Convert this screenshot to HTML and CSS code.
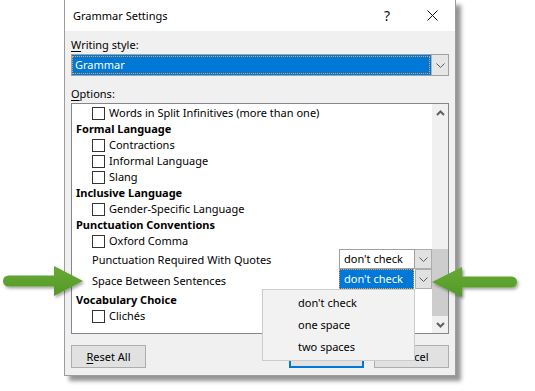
FILE: index.html
```html
<!DOCTYPE html>
<html>
<head>
<meta charset="utf-8">
<title>Grammar Settings</title>
<link rel="stylesheet" href="styles.css">
</head>
<body>
<div class="dialog">
  <div class="titlebar">
    <span class="title">Grammar Settings</span>
    <span class="tb-btn help">?</span>
    <span class="tb-btn close"><svg width="11" height="11" viewBox="0 0 11 11"><path d="M0.5 0.5 L10.5 10.5 M10.5 0.5 L0.5 10.5" stroke="#111" stroke-width="1" fill="none"/></svg></span>
  </div>
  <div class="content">
    <div class="label"><u>W</u>riting style:</div>
    <div class="combo">
      <div class="combo-value"><span class="focus-rect">Grammar</span></div>
      <div class="combo-btn"><svg width="9" height="5" viewBox="0 0 9 5"><polyline points="0.5,0.5 4.5,4.5 8.5,0.5" fill="none" stroke="#5a5a5a" stroke-width="1"/></svg></div>
    </div>
    <div class="label options-label"><u>O</u>ptions:</div>
    <div class="listbox">
      <div class="list">
        <div class="row-c"><span class="box"></span>Words in Split Infinitives (more than one)</div>
        <div class="row-h">Formal Language</div>
        <div class="row-c"><span class="box"></span>Contractions</div>
        <div class="row-c"><span class="box"></span>Informal Language</div>
        <div class="row-c"><span class="box"></span>Slang</div>
        <div class="row-h">Inclusive Language</div>
        <div class="row-c"><span class="box"></span>Gender-Specific Language</div>
        <div class="row-h">Punctuation Conventions</div>
        <div class="row-c"><span class="box"></span>Oxford Comma</div>
        <div class="row-s">
          <span class="row-label">Punctuation Required With Quotes</span>
          <span class="dd">
            <span class="dd-val">don't check</span>
            <span class="dd-btn"><svg width="9" height="5" viewBox="0 0 9 5"><polyline points="0.5,0.5 4.5,4.5 8.5,0.5" fill="none" stroke="#5a5a5a" stroke-width="1"/></svg></span>
          </span>
        </div>
        <div class="row-s">
          <span class="row-label low">Space Between Sentences</span>
          <span class="dd">
            <span class="dd-val focused">don't check</span>
            <span class="dd-btn apart"><svg width="9" height="5" viewBox="0 0 9 5"><polyline points="0.5,0.5 4.5,4.5 8.5,0.5" fill="none" stroke="#5a5a5a" stroke-width="1"/></svg></span>
          </span>
        </div>
        <div class="row-h vocab">Vocabulary Choice</div>
        <div class="row-c"><span class="box"></span>Clichés</div>
      </div>
      <div class="scrollbar">
        <div class="sb-btn sb-up"><svg width="9" height="6" viewBox="0 0 9 6"><polyline points="1,5 4.5,1.5 8,5" fill="none" stroke="#606060" stroke-width="2"/></svg></div>
        <div class="sb-track"><div class="sb-thumb"></div></div>
        <div class="sb-btn sb-down"><svg width="9" height="6" viewBox="0 0 9 6"><polyline points="1,1 4.5,4.5 8,1" fill="none" stroke="#606060" stroke-width="2"/></svg></div>
      </div>
    </div>
    <div class="buttons">
      <div class="btn"><u>R</u>eset All</div>
      <div class="btn default">OK</div>
      <div class="btn cancel">Cancel</div>
    </div>
  </div>
</div>

<div class="popup">
  <div class="popup-item">don't check</div>
  <div class="popup-item">one space</div>
  <div class="popup-item">two spaces</div>
</div>

<svg class="arrows" width="535" height="391" viewBox="0 0 535 391">
  <defs>
    <filter id="sh" x="-10%" y="-30%" width="130%" height="170%">
      <feDropShadow dx="1.5" dy="2" stdDeviation="1.5" flood-color="#000" flood-opacity="0.35"/>
    </filter>
    <linearGradient id="g" x1="0" y1="0" x2="0" y2="1">
      <stop offset="0" stop-color="#66a835"/>
      <stop offset="1" stop-color="#549a27"/>
    </linearGradient>
  </defs>
  <path filter="url(#sh)" fill="url(#g)" d="M8.5 275.5 H54 V266 L83 281 L54 296 V286.5 H8.5 A5.5 5.5 0 0 1 8.5 275.5 Z"/>
  <path filter="url(#sh)" fill="url(#g)" d="M432 282 L462 267 V276.5 H511.5 A5.5 5.5 0 0 1 511.5 287.5 H462 V297 Z"/>
</svg>
</body>
</html>
```

FILE: styles.css
```css
* {
  box-sizing: border-box;
}

html,
body {
  margin: 0;
  padding: 0;
  background: #ffffff;
}

body {
  width: 535px;
  height: 391px;
  overflow: hidden;
  position: relative;
  font-family: "Noto Sans", "Open Sans", sans-serif;
  font-size: 11px;
  color: #000000;
}

u {
  text-decoration: underline;
  text-underline-offset: 2px;
}

.dialog {
  margin-left: 64px;
  width: 392px;
  height: 376px;
  background: #f0f0f0;
  border: 1px solid #9c9c9c;
  border-top: 0;
  box-shadow: 5px 5px 4px rgba(0, 0, 0, 0.42);
}

.titlebar {
  height: 31px;
  background: #ffffff;
  display: flex;
  align-items: center;
  padding-left: 8px;
}

.title {
  flex: 1;
  font-size: 11px;
  line-height: 16px;
}

.tb-btn {
  width: 46px;
  height: 31px;
  display: flex;
  align-items: center;
  justify-content: center;
}

.help {
  font-size: 14px;
  color: #111;
  padding-left: 2px;
}

.content {
  padding: 6px 6px 0 6px;
}

.label {
  height: 16px;
  line-height: 16px;
}

.options-label {
  margin-top: 10px;
}

.combo {
  margin-top: 1px;
  width: 378px;
  height: 22px;
  display: flex;
  border: 1px solid #a0a0a0;
  background: #ffffff;
}

.combo-value {
  flex: 1;
  background: #0078d7;
  padding: 1px 1px 1px 0;
}

.focus-rect {
  display: block;
  height: 100%;
  border: 1px dotted #f6a04e;
  color: #ffffff;
  padding-left: 2px;
  line-height: 16px;
}

.combo-btn {
  width: 17px;
  background: #e6e6e6;
  border-left: 1px solid #b4b4b4;
  display: flex;
  align-items: center;
  justify-content: center;
}

.listbox {
  margin-top: 1px;
  width: 378px;
  height: 231px;
  border: 1px solid #82878f;
  background: #ffffff;
  display: flex;
}

.list {
  flex: 1;
  padding-top: 1px;
}

.row-h {
  height: 16px;
  line-height: 16px;
  padding-left: 4px;
  font-weight: bold;
}

.row-h.vocab {
  margin-top: 3px;
}

.row-c {
  height: 16px;
  line-height: 16px;
  display: flex;
  align-items: center;
  padding-left: 20px;
}

.box {
  width: 13px;
  height: 13px;
  border: 1px solid #333333;
  background: #ffffff;
  margin-right: 4px;
  flex: none;
}

.row-s {
  height: 20px;
  display: flex;
  align-items: center;
  justify-content: space-between;
  padding-left: 20px;
}

.row-label.low {
  padding-top: 3px;
}

.dd {
  display: flex;
  height: 20px;
}

.dd-val {
  width: 76px;
  height: 20px;
  border: 1px solid #a0a0a0;
  background: #ffffff;
  padding-left: 4px;
  line-height: 17px;
}

.dd-val.focused {
  width: 75px;
  background: #0078d7;
  border: 1px dotted #f6a04e;
  color: #ffffff;
}

.dd-btn {
  width: 17px;
  height: 20px;
  background: #e1e1e1;
  border: 1px solid #adadad;
  border-left: 0;
  display: flex;
  align-items: center;
  justify-content: center;
}

.dd-btn.apart {
  margin-left: 1px;
  border-left: 1px solid #adadad;
}

.scrollbar {
  width: 16px;
  background: #f0f0f0;
  display: flex;
  flex-direction: column;
}

.sb-btn {
  height: 17px;
  display: flex;
  align-items: center;
  justify-content: center;
}

.sb-track {
  flex: 1;
  display: flex;
  flex-direction: column;
  justify-content: flex-end;
}

.sb-thumb {
  height: 67px;
  background: #cdcdcd;
}

.buttons {
  margin-top: 11px;
  width: 378px;
  display: flex;
}

.btn {
  width: 75px;
  height: 23px;
  background: #e1e1e1;
  border: 1px solid #adadad;
  display: flex;
  align-items: center;
  justify-content: center;
}

.btn.default {
  margin-left: auto;
  border: 2px solid #0078d7;
}

.btn.cancel {
  margin-left: 10px;
}

.popup {
  position: absolute;
  left: 262px;
  top: 289px;
  width: 153px;
  height: 72px;
  background: #f2f2f2;
  border: 1px solid #cccccc;
  padding-top: 2px;
}

.popup-item {
  height: 22px;
  line-height: 22px;
  padding-left: 35px;
}

.arrows {
  position: absolute;
  left: 0;
  top: 0;
  pointer-events: none;
}
```
